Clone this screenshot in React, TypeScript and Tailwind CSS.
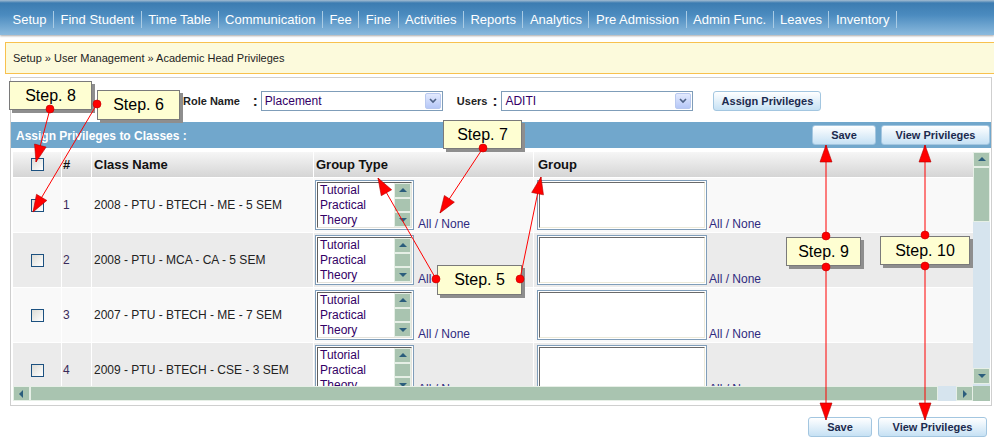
import React from "react";

const navItems = [
  "Setup",
  "Find Student",
  "Time Table",
  "Communication",
  "Fee",
  "Fine",
  "Activities",
  "Reports",
  "Analytics",
  "Pre Admission",
  "Admin Func.",
  "Leaves",
  "Inventory",
];

const rows = [
  { no: "1", name: "2008 - PTU - BTECH - ME - 5 SEM" },
  { no: "2", name: "2008 - PTU - MCA - CA - 5 SEM" },
  { no: "3", name: "2007 - PTU - BTECH - ME - 7 SEM" },
  { no: "4", name: "2009 - PTU - BTECH - CSE - 3 SEM" },
];

const callouts = [
  { label: "Step. 8", x: 9, y: 81, w: 83, h: 29 },
  { label: "Step. 6", x: 97, y: 90, w: 83, h: 30 },
  { label: "Step. 7", x: 443, y: 120, w: 79, h: 29 },
  { label: "Step. 5", x: 437, y: 265, w: 85, h: 30 },
  { label: "Step. 9", x: 786, y: 237, w: 75, h: 29 },
  { label: "Step. 10", x: 880, y: 236, w: 90, h: 29 },
];

const arrows = [
  { x1: 50, y1: 109, x2: 36, y2: 162 },
  { x1: 97, y1: 104, x2: 33, y2: 212 },
  { x1: 483, y1: 148, x2: 440, y2: 213 },
  { x1: 436, y1: 279, x2: 378, y2: 178 },
  { x1: 520, y1: 279, x2: 541, y2: 177 },
  { x1: 826, y1: 236, x2: 826, y2: 145 },
  { x1: 826, y1: 267, x2: 826, y2: 420 },
  { x1: 925, y1: 235, x2: 925, y2: 145 },
  { x1: 925, y1: 266, x2: 925, y2: 420 },
];

function head(a: { x1: number; y1: number; x2: number; y2: number }) {
  const dx = a.x2 - a.x1;
  const dy = a.y2 - a.y1;
  const len = Math.hypot(dx, dy);
  const ux = dx / len;
  const uy = dy / len;
  const bx = a.x2 - ux * 17;
  const by = a.y2 - uy * 17;
  return `${a.x2},${a.y2} ${bx - uy * 6},${by + ux * 6} ${bx + uy * 6},${by - ux * 6}`;
}

function Tri({ dir }: { dir: "up" | "down" | "left" | "right" }) {
  const pts = {
    up: "1,6 5,2 9,6",
    down: "1,3 5,7 9,3",
    left: "6,1 2,5 6,9",
    right: "3,1 7,5 3,9",
  }[dir];
  return (
    <svg width="10" height="10" viewBox="0 0 10 10">
      <polygon points={pts} fill="#2b5d7c" />
    </svg>
  );
}

function ScrollBtn({ dir, className }: { dir: "up" | "down" | "left" | "right"; className: string }) {
  return (
    <div className={`flex items-center justify-center border border-[#e6efe6] bg-[#a9c4b0] ${className}`}>
      <Tri dir={dir} />
    </div>
  );
}

function Button({ label, w }: { label: string; w: string }) {
  return (
    <button
      className={`flex h-[20px] ${w} items-center justify-center rounded-[3px] border border-[#a3c6e0] bg-[linear-gradient(to_bottom,#ffffff,#c6e1f4)] text-[11px] font-bold text-[#1b2a4e]`}
    >
      {label}
    </button>
  );
}

function Select({ value, w }: { value: string; w: string }) {
  return (
    <div className={`flex h-[20px] ${w} items-center justify-between border border-[#7f9db9] bg-white pl-[3px] pr-px`}>
      <span className="text-[12px] text-[#330066]">{value}</span>
      <div className="flex h-[16px] w-[16px] items-center justify-center rounded-[2px] border border-[#b8c8ef] bg-[linear-gradient(to_bottom,#e3eafe,#b5c7f7)]">
        <svg width="8" height="6" viewBox="0 0 8 6">
          <polyline points="1,1 4,4 7,1" fill="none" stroke="#4d6185" strokeWidth="1.6" />
        </svg>
      </div>
    </div>
  );
}

function Checkbox() {
  return <div className="h-[13px] w-[13px] border border-[#1c5180] bg-[linear-gradient(135deg,#dcdcd6,#ffffff)]" />;
}

function ListBox() {
  return (
    <div className="h-[50px] w-[99px] border border-[#7f9db9] bg-white p-px">
      <div className="flex h-full border border-b-[#e4e2da] border-l-[#5f5f5f] border-r-[#e4e2da] border-t-[#5f5f5f]">
        <div className="flex-1 pl-[2px] text-[12px] leading-[15px] text-[#330066]">
          <div>Tutorial</div>
          <div>Practical</div>
          <div>Theory</div>
        </div>
        <div className="flex w-[17px] flex-col bg-[#a9c4b0]">
          <ScrollBtn dir="up" className="h-[15px]" />
          <div className="flex-1 border border-[#e6efe6] bg-[#a9c4b0]" />
          <ScrollBtn dir="down" className="h-[15px]" />
        </div>
      </div>
    </div>
  );
}

function TextBox() {
  return (
    <div className="h-[50px] w-[170px] border border-[#7f9db9] bg-white p-px">
      <div className="h-full border border-b-[#ece9d8] border-l-[#6a6a6a] border-r-[#ece9d8] border-t-[#6a6a6a]" />
    </div>
  );
}

function AllNone() {
  return <span className="mb-[-1px] self-end text-[12px] text-[#2f2a80]">All / None</span>;
}

export default function App() {
  return (
    <div className="relative h-[442px] w-[994px] overflow-hidden bg-white font-['Liberation_Sans',Arial,sans-serif]">
      <nav className="flex h-[35px] items-center bg-[linear-gradient(to_bottom,#a5bdd2_0px,#3c7cb1_3px,#4b8bbf_15px,#8bbadd_35px)] pl-[6px] pt-[3px] shadow-[0_1px_2px_rgba(0,0,0,0.35)]">
        {navItems.map((n) => (
          <span key={n} className="border-r border-[#a9cbe4] px-[6.5px] text-[13px] leading-[17px] text-white">
            {n}
          </span>
        ))}
      </nav>

      <div className="ml-[5px] mt-[7px] flex h-[32px] items-center border border-r-0 border-[#f8c14e] bg-[#fcfadc] pl-[7px] pt-px text-[11px] text-[#222]">
        Setup » User Management » Academic Head Privileges
      </div>

      <div className="ml-[10px] mt-[3px] h-[329px] w-[982px] border border-[#cfcfcf]">
        <div className="flex h-[44px] items-start pl-[172px] pt-[13px]">
          <span className="text-[11px] font-bold leading-[20px] text-[#222]">Role Name</span>
          <span className="ml-[13px] mr-[3px] text-[15px] font-bold leading-[20px] text-[#222]">:</span>
          <Select value="Placement" w="w-[182px]" />
          <span className="ml-[14px] text-[11px] font-bold leading-[20px] text-[#222]">Users</span>
          <span className="ml-[5px] mr-[4px] text-[15px] font-bold leading-[20px] text-[#222]">:</span>
          <Select value="ADITI" w="w-[192px]" />
          <div className="ml-[20px]">
            <Button label="Assign Privileges" w="w-[108px]" />
          </div>
        </div>

        <div className="flex h-[26px] items-center justify-between bg-[#71a7cc] pl-[5px] pr-px">
          <span className="pt-px text-[12px] font-bold text-white">Assign Privileges to Classes :</span>
          <div className="flex gap-[5px]">
            <Button label="Save" w="w-[64px]" />
            <Button label="View Privileges" w="w-[109px]" />
          </div>
        </div>

        <div className="ml-[2px] mt-[4px] w-[977px]">
          <div className="flex h-[234px]">
            <div className="w-[960px] overflow-hidden">
              <div className="grid h-[25px] grid-cols-[49px_30px_222px_220px_439px] bg-[linear-gradient(to_bottom,#f6f6f6,#d5d5d5)] text-[13px] font-bold text-[#111]">
                <div className="flex items-center justify-center border-r border-white">
                  <Checkbox />
                </div>
                <div className="flex items-center border-r border-white pl-px">#</div>
                <div className="flex items-center border-r border-white pl-[2px]">Class Name</div>
                <div className="flex items-center border-r border-white pl-[2px]">Group Type</div>
                <div className="flex items-center pl-[4px]">Group</div>
              </div>
              {rows.map((r, i) => (
                <div
                  key={r.no}
                  className={`grid h-[55px] grid-cols-[49px_30px_222px_220px_439px] border-t border-white ${
                    i % 2 === 0 ? "bg-[#f9f9f9]" : "bg-[#ebebeb]"
                  }`}
                >
                  <div className="flex items-center justify-center border-r border-white pt-px">
                    <Checkbox />
                  </div>
                  <div className="flex items-center border-r border-white pl-px text-[12px] text-[#3a2a5a]">{r.no}</div>
                  <div className="flex items-center border-r border-white pl-[2px] text-[12px] text-[#222]">{r.name}</div>
                  <div className="flex items-start gap-[4px] border-r border-white pl-px pt-[2px]">
                    <ListBox />
                    <AllNone />
                  </div>
                  <div className="flex items-start gap-[2px] pl-[3px] pt-[2px]">
                    <TextBox />
                    <AllNone />
                  </div>
                </div>
              ))}
            </div>
            <div className="flex w-[17px] flex-col bg-[#d6e4ee]">
              <ScrollBtn dir="up" className="h-[15px]" />
              <div className="h-[55px] border border-[#e6efe6] bg-[#a9c4b0]" />
              <div className="flex-1" />
              <ScrollBtn dir="down" className="h-[16px]" />
              <div className="h-[2px]" />
            </div>
          </div>
          <div className="flex h-[15px] bg-[#a9c4b0]">
            <ScrollBtn dir="left" className="w-[17px]" />
            <div className="w-[908px] border border-[#e6efe6] bg-[#a9c4b0]" />
            <div className="w-[18px] bg-[#d6e4ee]" />
            <ScrollBtn dir="right" className="w-[17px]" />
            <div className="w-[17px]" />
          </div>
        </div>
      </div>

      <div className="mt-[11px] flex justify-end gap-[6px] pr-[7px]">
        <Button label="Save" w="w-[64px]" />
        <Button label="View Privileges" w="w-[109px]" />
      </div>

      {callouts.map((c) => (
        <div
          key={c.label}
          className="absolute flex items-center justify-center border border-[#7a7a7a] bg-[#fefed2] text-[16px] text-black shadow-[3px_3px_0_#8e8e8e]"
          style={{ left: c.x, top: c.y, width: c.w, height: c.h }}
        >
          {c.label}
        </div>
      ))}

      <svg className="pointer-events-none absolute left-0 top-0" width="994" height="442">
        {arrows.map((a, i) => (
          <g key={i}>
            <line x1={a.x1} y1={a.y1} x2={a.x2} y2={a.y2} stroke="#ff0000" strokeWidth="1" />
            <polygon points={head(a)} fill="#ff0000" stroke="#b00000" strokeWidth="0.6" />
            <circle cx={a.x1} cy={a.y1} r="4" fill="#ff0000" stroke="#c00000" strokeWidth="0.6" />
          </g>
        ))}
      </svg>
    </div>
  );
}
